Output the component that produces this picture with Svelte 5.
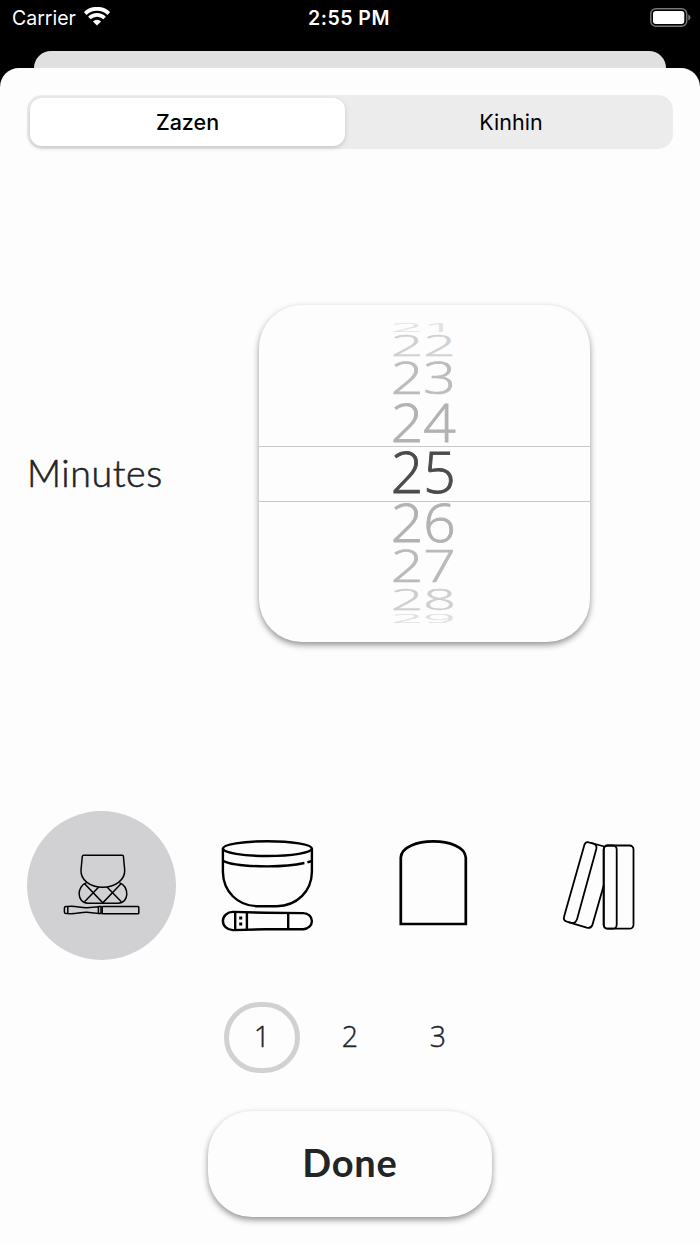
<script lang="ts">
  const modes = ['Zazen', 'Kinhin']
  const counts = [1, 2, 3]
  const bells = ['inkin', 'bowl', 'han', 'clappers']

  // wheel rows, squashed and faded towards the edges of the drum
  const rows = [
    { value: 21, height: 10, scale: 0.22, color: '#e2e2e2' },
    { value: 22, height: 26, scale: 0.5, color: '#d0d0d0' },
    { value: 23, height: 38, scale: 0.77, color: '#bcbcbc' },
    { value: 24, height: 50, scale: 0.94, color: '#b2b2b2' },
    { value: 25, height: 50, scale: 1, color: '#4a4b4d' },
    { value: 26, height: 50, scale: 0.94, color: '#b2b2b2' },
    { value: 27, height: 39, scale: 0.77, color: '#bababa' },
    { value: 28, height: 28, scale: 0.5, color: '#cecece' },
    { value: 29, height: 10, scale: 0.22, color: '#dedede' },
  ]

  let mode = $state('Zazen')
  let minutes = $state(25)
  let bell = $state('inkin')
  let count = $state(1)
</script>

<div class="phone">
  <header class="status">
    <div class="carrier">
      <span>Carrier</span>
      <svg width="26" height="19" viewBox="0 0 26 19" fill="none" stroke="#fff">
        <path d="M1.2 6.6 A17 17 0 0 1 24.8 6.6" stroke-width="4" />
        <path d="M5.4 11 A11 11 0 0 1 20.6 11" stroke-width="3.7" />
        <path d="M13 18.6 L8.9 14.5 A5.9 5.9 0 0 1 17.1 14.5 Z" fill="#fff" stroke="none" />
      </svg>
    </div>
    <span class="time">2:55 PM</span>
    <svg class="battery" width="41" height="19" viewBox="0 0 41 19">
      <rect x="0.8" y="0.8" width="35.9" height="17.4" rx="5" fill="none" stroke="#777" stroke-width="1.5" />
      <rect x="3" y="3" width="31.3" height="13" rx="3" fill="#fff" />
      <path d="M38.3 6.5 Q40.5 7.3 40.5 9.5 Q40.5 11.7 38.3 12.5 Z" fill="#777" />
    </svg>
  </header>

  <div class="behind"></div>

  <main class="sheet">
    <div class="segmented">
      {#each modes as m}
        <button class="segment" class:selected={mode === m} onclick={() => (mode = m)}>{m}</button>
      {/each}
    </div>

    <div class="duration">
      <span class="label">Minutes</span>
      <div class="wheel">
        <div class="band"></div>
        {#each rows as row}
          <button class="row" style="height: {row.height}px; color: {row.color}" onclick={() => (minutes = row.value)}>
            <span style="transform: scaleY({row.scale})">{row.value}</span>
          </button>
        {/each}
      </div>
    </div>

    <div class="bells">
      {#each bells as b}
        <button class="bell" class:selected={bell === b} onclick={() => (bell = b)} aria-label={b}>
          {#if b === 'inkin'}
            <svg viewBox="27 811 149 149" stroke-width="1.5">
              <path d="M83.4 855.3 H122.4 Q123.3 855.3 123.4 856.3 L124.7 870 C125.2 880 115 887.3 102.8 887.3 C90 887.3 80.5 880 81 870 L82.3 856.3 Q82.5 855.3 83.4 855.3 Z" />
              <path d="M86.4 882.6 C76.5 886 76.5 903.2 88 903.2 H118 C129.5 903.2 129.5 886 119.4 882.6" />
              <path d="M84.5 901.8 L98.8 887 M84.4 883.5 L102.8 902.8 L121.2 883.5 M107 887 L121.3 901.8" />
              <path d="M68 906.5 H66 Q64.4 906.5 64.4 908 V912 Q64.4 913.6 66 913.6 H68 C76 914.6 80 911.8 87 912.2 L98.4 913.4 V906.8 L87 907.7 C80 908 76 905.5 68 906.5 Z M67.8 906.5 V913.6" />
              <path d="M98.4 906.6 H101 V913.5 H98.4" />
              <rect x="102.2" y="906.4" width="36.6" height="7.3" rx="0.8" />
            </svg>
          {:else if b === 'bowl'}
            <svg viewBox="192.8 811 149 149" stroke-width="2.4">
              <ellipse cx="267.2" cy="848.6" rx="44.5" ry="7.4" />
              <path d="M222.7 848.6 V872 C223 891 237 906.2 258 906.2 H276.5 C297 906.2 311.4 891 311.7 872 V848.6" />
              <path d="M222.7 860.8 C236 867.2 281 868.2 304.2 863 M307.2 862.3 L311.7 861" />
              <path d="M233 911.9 C227 911.8 222.7 916 222.7 921 C222.7 926 227 930.2 233 930.1 L265 929.2 L303 929.2 C308 929 311.7 925.5 311.7 921 C311.7 916.5 308 913.2 303 913.1 L265 912.8 Z" />
              <path d="M235 911.9 V930 M246.7 912.2 V929.8 M288 913 V929.2" />
              <path d="M239 918 H242 M239 924 H242" stroke-width="3" />
            </svg>
          {:else if b === 'han'}
            <svg viewBox="358.5 811 149 149" stroke-width="2.7">
              <path d="M400.3 924 V857.5 C401.5 836 464 836 465.3 857.5 V924 Z" />
            </svg>
          {:else}
            <svg viewBox="524.3 811 149 149" stroke-width="1.8">
              <rect x="604" y="845.5" width="29.8" height="83.2" rx="4" />
              <rect x="604" y="845.5" width="13" height="83.2" rx="4" />
              <path d="M584.8 844.6 Q586 841.6 589 842.3 L593.5 843.5 Q597.6 844.8 596.6 849 L577.4 919 Q575.8 923.8 571.4 922.8 L567.3 921.7 Q563.3 920.5 564.4 916.4 Z" />
              <path d="M591 842.8 L604.6 846.5 M569.5 922.4 L587 927.7 Q591.3 928.8 592.8 924.6 L604 885.5" />
            </svg>
          {/if}
        </button>
      {/each}
    </div>

    <div class="counts">
      {#each counts as n}
        <button class="count" class:selected={count === n} onclick={() => (count = n)}>{n}</button>
      {/each}
    </div>

    <button class="done">Done</button>
  </main>
</div>

<style>
  :global(body) {
    background: #000;
  }

  .phone {
    height: 1244px;
    display: flex;
    flex-direction: column;
    overflow: hidden;
    background: #000;
    font-family: Lato, sans-serif;
    color: #222426;
  }

  button {
    margin: 0;
    padding: 0;
    border: none;
    background: none;
    font: inherit;
    color: inherit;
  }

  .status {
    height: 51px;
    box-sizing: border-box;
    padding: 7px 9px 0 12px;
    display: grid;
    grid-template-columns: 1fr auto 1fr;
    align-items: start;
    color: #fff;
    font: 400 19.5px/22px Inter, sans-serif;
  }
  .carrier {
    display: flex;
    gap: 8px;
  }
  .time {
    margin-right: 5px;
    font-weight: 600;
    letter-spacing: 0.5px;
  }
  .battery {
    justify-self: end;
    margin-top: 1px;
  }

  .behind {
    height: 17px;
    flex-shrink: 0;
    margin: 0 34px;
    border-radius: 17px 17px 0 0;
    background: #e0e0e0;
  }

  .sheet {
    flex: 1;
    box-sizing: border-box;
    padding: 27px 27px 0;
    display: flex;
    flex-direction: column;
    border-radius: 19px 19px 0 0;
    background: #fdfdfd;
  }

  /* mode switch */
  .segmented {
    height: 54px;
    box-sizing: border-box;
    padding: 3px 0 3px 3px;
    display: grid;
    grid-template-columns: 315px 1fr;
    border-radius: 15px;
    background: #ececec;
  }
  .segment {
    border-radius: 12px;
    font: 400 21.5px Inter, sans-serif;
    color: #000;
  }
  .segment:last-child {
    padding-left: 4px;
  }
  .segment.selected {
    background: #fff;
    font-weight: 500;
    box-shadow: 0 2px 5px rgba(0, 0, 0, 0.16);
  }

  /* minutes wheel */
  .duration {
    margin-top: 156px;
    display: flex;
    align-items: center;
  }
  .label {
    width: 231.5px;
    padding-bottom: 3px;
    box-sizing: border-box;
    font-size: 37.5px;
    font-weight: 300;
    letter-spacing: 0.6px;
    -webkit-text-stroke: 0.6px;
  }
  .wheel {
    position: relative;
    width: 331.5px;
    height: 337px;
    box-sizing: border-box;
    padding-top: 16.5px;
    display: flex;
    flex-direction: column;
    border-radius: 43px;
    background: #fdfdfd;
    box-shadow: 0 3px 6px rgba(0, 0, 0, 0.42);
  }
  .band {
    position: absolute;
    top: 141px;
    left: 0;
    right: 0;
    height: 54px;
    border: solid #c8c8c8;
    border-width: 1px 0;
  }
  .row {
    padding-right: 2px;
    display: flex;
    align-items: center;
    justify-content: center;
    font: 300 57px/46px 'Open Sans', sans-serif;
    -webkit-text-stroke: 0.9px;
  }

  /* bell choice */
  .bells {
    margin-top: 169px;
    display: flex;
    gap: 16.8px;
  }
  .bell {
    width: 149px;
    height: 149px;
    flex-shrink: 0;
    border-radius: 50%;
  }
  .bell.selected {
    background: #d1d1d3;
  }
  .bell svg {
    display: block;
    fill: none;
    stroke: #000;
  }

  /* number of rings */
  .counts {
    margin-top: 42px;
    display: flex;
    justify-content: center;
    gap: 12px;
  }
  .count {
    width: 76px;
    height: 71px;
    box-sizing: border-box;
    padding-bottom: 3px;
    border: 5px solid transparent;
    border-radius: 36px;
    font: 300 28.5px 'Open Sans', sans-serif;
    -webkit-text-stroke: 0.4px;
  }
  .count.selected {
    border-color: #d1d1d3;
  }

  .done {
    align-self: center;
    width: 284px;
    height: 106px;
    margin-top: 38px;
    padding-bottom: 4px;
    border-radius: 44px;
    background: #fdfdfd;
    font-size: 38px;
    font-weight: 700;
    letter-spacing: 0.8px;
    box-shadow: 0 3px 6px rgba(0, 0, 0, 0.42);
  }
</style>
